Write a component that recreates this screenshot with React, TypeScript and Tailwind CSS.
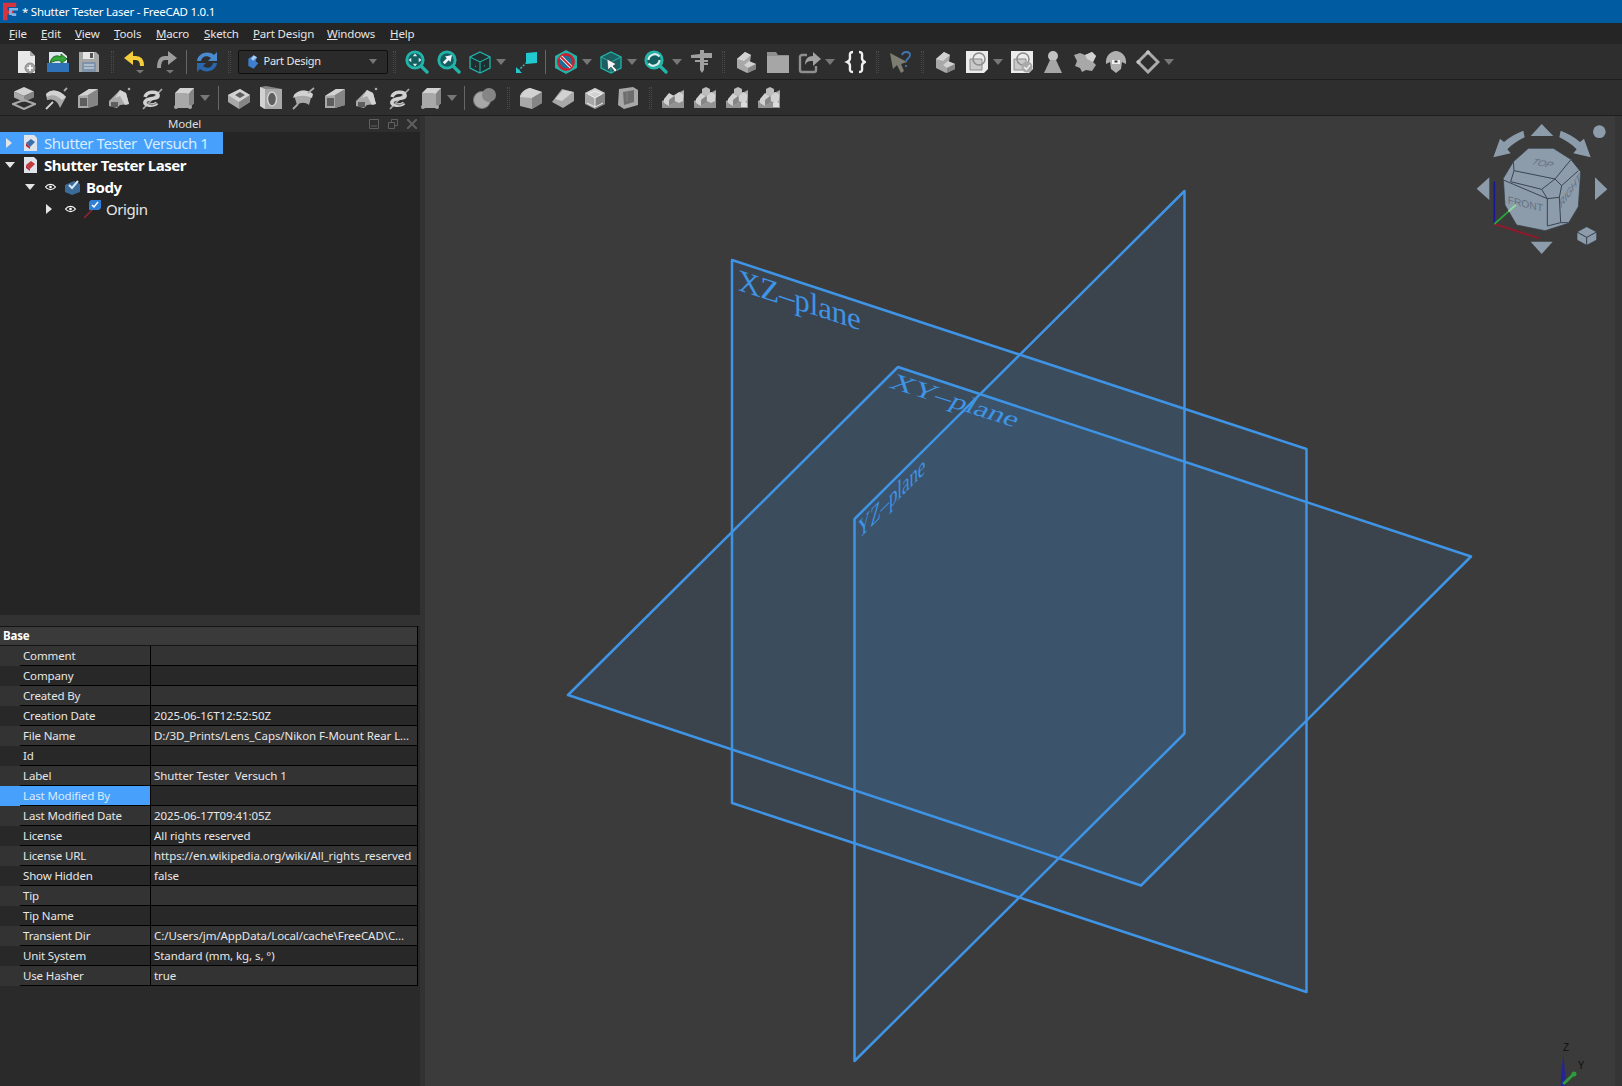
import type { ReactNode } from "react";

const T = "#d2d2d2";
const L = "#a8a8a8";
const R = "#858585";
const D = "#5e5e5e";
const TEAL = "#22b3a9";

const box = (
  <>
    <path d="M12 2 22 7v11l-10 5L2 18V7Z" fill={L} />
    <path d="M12 2 22 7l-10 5L2 7Z" fill={T} />
    <path d="M22 7 12 12v11l10-5Z" fill={R} />
  </>
);
const step = (
  <>
    <path d="M3 9 11 2l6 3-1 7 6 2v5l-9 4-10-5Z" fill={L} />
    <path d="M3 9 11 2l6 3-7 6Z" fill={T} />
    <path d="M15 11l7 3-8 4-4-3Z" fill={T} />
    <path d="M14 23v-5l8-4v5Z" fill={R} />
  </>
);
const loft = (
  <>
    <path d="M2 10 13 3h9v16l-10 3H2Z" fill={L} />
    <path d="M2 10 13 3h9l-10 6Z" fill={T} />
    <path d="M4 12h7v8H4Z" fill={D} />
    <path d="M12 9 22 3v16l-10 3Z" fill={R} />
  </>
);
const pipe = (
  <>
    <path d="M1 15 12 4l6 3 3 11-9 1-3 3-8-2Z" fill={L} />
    <path d="M12 4l6 3 3 11-4 1-5-9-5 2Z" fill={T} />
    <path d="M3 16h7v5H3Z" fill={D} />
    <circle cx="21" cy="3" r="1.300" fill={L} />
  </>
);
const helix = (
  <>
    <path d="M3 23 22 3" stroke={L} strokeWidth="1.800" />
    <path d="M5 11c2-6 12-6 13-2 1 5-12 2-13 7-1 4 9 4 12 1" fill="none" stroke={T} strokeWidth="3.600" />
    <path d="M7 17c3 2 7 2 10 0" fill="none" stroke={R} strokeWidth="1.500" />
  </>
);
const revolve = (
  <>
    <path d="M2 8C8 2 16 4 22 11l-6 11C14 15 9 12 3 14Z" fill={L} />
    <path d="M2 8C8 2 16 4 22 11l-4 3C13 9 8 8 3 11Z" fill={T} />
    <path d="M2 23 9 16" stroke={T} strokeWidth="1.800" />
    <path d="M20 5l3-3" stroke={L} strokeWidth="1.800" />
  </>
);
const prim = (
  <>
    <path d="M3 7 8 2h14v15l-5 5H3Z" fill={T} />
    <path d="M3 7h14v15H3Z" fill={L} />
    <path d="M17 7l5-5v15l-5 5Z" fill={R} />
    <circle cx="16" cy="6" r="1.800" fill={T} />
    <circle cx="4" cy="21" r="2" fill={L} />
    <circle cx="18" cy="21" r="2" fill={L} />
  </>
);
const stack = (n: number) => (
  <>
    <path d="M1 15 9 11l14-7v18H1Z" fill={L} />
    <path d="M1 17 13 11l10 1v10H1Z" fill="#929292" />
    <path d="M3 13l5-6 5 3v7l-5 3-5-3Z" fill={T} />
    <path d="M8 14l5-4v7l-5 3Z" fill={R} />
    {n > 0 && <path d="M14 9l4-3 4 2v7l-4 2-4-2Z" fill={T} />}
    {n > 1 && <path d="M9 3l4-2 4 2v5l-4 2-4-2Z" fill="#bdbdbd" />}
    {n > 2 && <path d="M16 17l3-2 3 2v4h-6Z" fill="#dcdcdc" />}
  </>
);
const mag = (inner: ReactNode) => (
  <>
    <path d="M15.500 15.500 22 22" stroke={TEAL} strokeWidth="3.400" strokeLinecap="round" />
    <circle cx="10" cy="10" r="8.200" fill="#155e60" stroke={TEAL} strokeWidth="2.800" />
    {inner}
  </>
);
const wire = (
  <>
    <path d="M12 2 22 7v11l-10 5L2 18V7Z" fill="#1f2e2f" stroke={TEAL} strokeWidth="1.300" />
    <path d="M2 7 12 12l10-5M12 12v11" fill="none" stroke={TEAL} strokeWidth="1.100" />
    <path d="M7 16l1 .5M16 16l1-.5" stroke={TEAL} />
  </>
);
const doc = (
  <>
    <path d="M4 1h12l5 5v17H4Z" fill="#e8e8e8" />
    <path d="M16 1v5h5Z" fill="#a9a9a9" />
  </>
);

const icons: Record<string, ReactNode> = {
  newDoc: (
    <>
      {doc}
      <circle cx="16" cy="18" r="5" fill="#a3a3a3" stroke="#888" />
      <path d="M16 15v6M13 18h6" stroke="#fff" strokeWidth="1.600" />
    </>
  ),
  open: (
    <>
      <path d="M3 2h13l5 4v10H3Z" fill="#dfe7ee" />
      <path d="M4 13c1-6 6-9 11-6V4l6 5-6 5v-3c-4-1-7 0-11 2Z" fill="#35a63a" stroke="#0d5c10" strokeWidth=".8" />
      <path d="M1 13h22v9H1Z" fill="#2f72b8" />
    </>
  ),
  save: (
    <>
      <path d="M2 2h17l3 3v17H2Z" fill="#a6a6a6" />
      <path d="M6 2h11v7H6Z" fill="#e6e6e6" />
      <path d="M13 3h3v5h-3Z" fill="#555" />
      <path d="M5 12h14v10H5Z" fill="#7f93aa" />
      <path d="M7 15h10M7 18h10" stroke="#dfe6ee" />
    </>
  ),
  undo: (
    <>
      <path d="M9 8h4c4 0 6 3 6 8" fill="none" stroke="#f4cd3a" strokeWidth="4" />
      <path d="M10 1 1 8l9 7Z" fill="#f4cd3a" />
      <path d="M13 20h8l-4 3.500Z" fill="#777" />
    </>
  ),
  redo: (
    <>
      <path d="M15 8h-4c-4 0-6 3-6 10" fill="none" stroke="#9c9c9c" strokeWidth="4" />
      <path d="M14 1l9 7-9 7Z" fill="#9c9c9c" />
      <path d="M12 20h8l-4 3.500Z" fill="#777" />
    </>
  ),
  refresh: (
    <>
      <path d="M2 11C3 3 13 0 19 5l3-3v9h-9l3-3c-4-3-9-2-10 3Z" fill="#4a8ad0" />
      <path d="M22 13c-1 8-11 11-17 6l-3 3v-9h9l-3 3c4 3 9 2 10-3Z" fill="#2a66aa" />
    </>
  ),
  partWb: (
    <>
      <path d="M5 7 13 2l5 3-2 6 4 3-7 8-8-4Z" fill="#3f7fd0" />
      <path d="M13 2l5 3-6 5-3-3Z" fill="#a9cdf5" />
    </>
  ),
  zoomFit: mag(<path d="M10 3.500l2.200 2.800H7.800ZM10 16.500l2.200-2.800H7.800ZM3.500 10l2.800-2.200v4.400ZM16.500 10l-2.800-2.200v4.400Z" fill="#d8eef5" />),
  zoomSel: mag(<path d="M15 5 8 6.500l1.800 1.800-4 4 1.900 1.900 4-4L13.500 12Z" fill="#eef7fb" />),
  cube: wire,
  fit: (
    <>
      <path d="M13 3l11-1v11l-11 1Z" fill="#22c9cf" />
      <path d="M5 21 13 13" stroke="#22c9cf" strokeWidth="1.400" strokeDasharray="2 1.500" />
      <path d="M3 17l6 6H3Z" fill="#22c9cf" />
    </>
  ),
  noEntry: (
    <>
      <path d="M12 0 23 6v12l-11 6L1 18V6Z" fill={TEAL} />
      <circle cx="12" cy="12" r="7.600" fill="#1d6d94" stroke="#c8202f" strokeWidth="2.600" />
      <path d="M6.800 6.800 17.200 17.200" stroke="#efefef" strokeWidth="3.600" />
      <path d="M6.800 6.800 17.200 17.200" stroke="#c8202f" strokeWidth="1.800" />
    </>
  ),
  cubeArrow: (
    <>
      <path d="M12 2 22 7v11l-10 5L2 18V7Z" fill="#1b5f60" stroke={TEAL} strokeWidth="1.300" />
      <path d="M2 7 12 12l10-5M12 12v11" fill="none" stroke={TEAL} strokeWidth="1" />
      <path d="M8 9l1 11 3-3 4 5 2-2-4-4 3-2Z" fill="#f4f4f4" stroke="#222" strokeWidth=".5" />
    </>
  ),
  magRefresh: mag(<path d="M4.500 10c0-5 7-8 11-3.500M15.500 10c0 5-7 8-11 3.500" fill="none" stroke="#d6f0ee" strokeWidth="2.200" />),
  caliper: (
    <path d="M11 0h4v3h8v5h-8v2h4v2h-4v1h4v2h-4v5l-2 3-2-3v-8H6v-2h5V8H2V5l9-1Z" fill="#a0a0a0" />
  ),
  folder: (
    <>
      <path d="M1 2h9l2 3h11v18H1Z" fill="#8f8f8f" />
      <path d="M1 6h22v17H1Z" fill="#a6a6a6" />
    </>
  ),
  share: (
    <>
      <path d="M10 5H5a2 2 0 0 0-2 2v13a2 2 0 0 0 2 2h12a2 2 0 0 0 2-2v-4" fill="none" stroke="#8f8f8f" strokeWidth="2.400" />
      <path d="M24 9 16 2v4c-5 0-8 3-8 9 2-4 4-4 8-4v5Z" fill="#a2a2a2" />
    </>
  ),
  braces: (
    <path d="M11 2C7 2 8 5 8 8s-1 3-3 4c2 1 3 1 3 4s-1 6 3 6M17 2c4 0 3 3 3 6s1 3 3 4c-2 1-3 1-3 4s1 6-3 6" fill="none" stroke="#f0f0f0" strokeWidth="2.400" />
  ),
  help: (
    <>
      <path d="M2 3 19 12l-6 2 3 7-3 2-4-8-4 4Z" fill="#7d7d72" />
      <path d="M14 5c1-4 8-4 8 0 0 4-4 3-4 7M18 15v2" fill="none" stroke="#3f77b5" strokeWidth="1.800" />
    </>
  ),
  step,
  sketch: (
    <>
      <path d="M1 1h22v18l-4 4H1Z" fill="#ececec" />
      <path d="M5 9h12v11H5Z" fill="#c9c9c9" stroke="#8c8c8c" />
      <circle cx="14" cy="9" r="6" fill="none" stroke="#8c8c8c" strokeWidth="1.500" />
    </>
  ),
  sketchOk: (
    <>
      <path d="M1 1h22v18l-4 4H1Z" fill="#ececec" />
      <path d="M4 9h12v11H4Z" fill="#c9c9c9" stroke="#8c8c8c" />
      <circle cx="13" cy="9" r="6" fill="none" stroke="#8c8c8c" strokeWidth="1.500" />
      <circle cx="17" cy="17" r="5.500" fill="#a9a9a9" />
      <path d="M14 17l2.400 2.400L20 15" fill="none" stroke="#eee" strokeWidth="1.500" />
    </>
  ),
  pawn: (
    <>
      <circle cx="12" cy="6" r="5" fill="#c2c2c2" />
      <path d="M9 10h6l6 13H3Z" fill="#a6a6a6" />
    </>
  ),
  shapes: (
    <>
      <path d="M1 5l6-2 5 2 7-3 4 4-3 6 3 3-4 6-6-1-4 2-2-4-5-2 2-5Z" fill="#a8a8a8" />
      <path d="M12 5l7-3 4 4-3 6-6-3Z" fill={T} />
    </>
  ),
  cast: (
    <>
      <path d="M2 14C1 6 7 1 12 1s11 5 10 13l-4-2-1 7-5 4-5-4-1-7Z" fill="#b0b0b0" />
      <path d="M8 10h8v4H8Z" fill="#f2f2f2" />
      <path d="M10.500 10.500h3v2h-3Z" fill="#333" />
    </>
  ),
  diamond: (
    <>
      <path d="M12 2 22 12 12 22 2 12Z" fill="none" stroke="#ababab" strokeWidth="3" />
      <circle cx="12" cy="2.500" r="2" fill="#c4c4c4" />
      <circle cx="2.500" cy="12" r="2" fill="#c4c4c4" />
    </>
  ),
  pad: (
    <>
      <path d="M12 1 22 5.500 12 10 2 5.500Z" fill={T} />
      <path d="M2 5.500 12 10v6L2 11.500Z" fill={L} />
      <path d="M22 5.500 12 10v6l10-4.500Z" fill={R} />
      <path d="M12 14 23 18l-11 5L1 18Z" fill="none" stroke={L} strokeWidth="2" />
    </>
  ),
  revolve,
  loft,
  pipe,
  helix,
  prim,
  pocket: (
    <>
      <path d="M13 3 23 9v7l-11 7L1 16V9Z" fill={L} />
      <path d="M13 3 23 9l-11 7L1 9Z" fill={T} />
      <path d="M8 9l5-3 5 3-5 3Z" fill={D} />
      <path d="M23 9 12 16v7l11-7Z" fill={R} />
    </>
  ),
  hole: (
    <>
      <path d="M1 1 7 0l16 3v20H5l-4-3Z" fill={R} />
      <path d="M6 3h17v20H6Z" fill={L} />
      <path d="M1 1l5 2v20l-5-3Z" fill={T} />
      <ellipse cx="13" cy="13" rx="4.500" ry="7" fill={D} stroke={T} strokeWidth="1.500" />
    </>
  ),
  groove: (
    <>
      <path d="M3 9c5-6 13-6 18-1l-3 11c-4-3-8-3-12 0Z" fill={L} />
      <path d="M2 12c6-3 13-3 19 0l1-4C16 3 8 4 3 9Z" fill={T} />
      <path d="M2 23l5-5M17 7l6-5" stroke={L} strokeWidth="1.800" />
    </>
  ),
  bool: (
    <>
      <circle cx="9" cy="14" r="8.500" fill={L} stroke="#777" />
      <circle cx="16" cy="9" r="7" fill={R} />
    </>
  ),
  fillet: (
    <>
      <path d="M1 20V10C2 6 6 3 11 2l12 4v11l-10 6Z" fill={L} />
      <path d="M1 11C3 6 6 3 11 2l12 4-10 6Z" fill={T} />
      <path d="M23 6 13 12v11l10-6Z" fill={R} />
    </>
  ),
  chamfer: (
    <>
      <path d="M1 16 11 3l12 3v9l-11 7Z" fill={L} />
      <path d="M4 13 12 4l10 2-11 9Z" fill={T} />
    </>
  ),
  draft: (
    <>
      {box}
      <path d="M5 8 12 5l7 3-7 4ZM12 12v9M4 17l8 4 8-4" fill="none" stroke="#eee" strokeWidth="1" />
    </>
  ),
  thick: (
    <>
      <path d="M4 3 18 1l5 3v15l-14 4-6-4Z" fill={L} />
      <path d="M8 6l11-2v12L9 19Z" fill="#6e6e6e" />
      <path d="M12 5v10" stroke={R} />
    </>
  ),
  mirror: stack(1),
  linear: stack(2),
  polar: stack(3),
  multi: stack(3),
};

function Grip() {
  return (
    <div className="w-[14px] h-[22px] flex items-center justify-center">
      <div className="w-[3px] h-full border-x border-dotted border-[#4a4a4a]" />
    </div>
  );
}

function Sep() {
  return (
    <div className="w-[9px] h-[24px] flex items-center justify-center">
      <div className="w-px h-full bg-[#666666]" />
    </div>
  );
}

function Drop() {
  return (
    <div className="w-[13.5px] flex items-center">
      <svg width="10" height="6" viewBox="0 0 10 6">
        <path d="M0 0h10L5 6Z" fill="#777777" />
      </svg>
    </div>
  );
}

function Tool({ name, w }: { name: string; w: string }) {
  return (
    <div className={`${w} h-full flex items-center justify-center`}>
      <svg width="24" height="24" viewBox="0 0 24 24">
        {icons[name]}
      </svg>
    </div>
  );
}

function Items({ items, wide }: { items: string[]; wide?: boolean }) {
  return (
    <>
      {items.map((it, i) => {
        if (it === "|") return <Sep key={i} />;
        if (it === ":") return <Grip key={i} />;
        if (it === "v") return <Drop key={i} />;
        return <Tool key={i} name={it} w={wide ? "w-[32px]" : "w-[31.5px]"} />;
      })}
    </>
  );
}

const menu = [
  ["F", "ile", "w-[32px]"],
  ["E", "dit", "w-[34px]"],
  ["V", "iew", "w-[39px]"],
  ["T", "ools", "w-[42px]"],
  ["M", "acro", "w-[48px]"],
  ["S", "ketch", "w-[49px]"],
  ["P", "art Design", "w-[74px]"],
  ["W", "indows", "w-[63px]"],
  ["H", "elp", "w-[40px]"],
];

const props: [string, string][] = [
  ["Comment", ""],
  ["Company", ""],
  ["Created By", ""],
  ["Creation Date", "2025-06-16T12:52:50Z"],
  ["File Name", "D:/3D_Prints/Lens_Caps/Nikon F-Mount Rear L..."],
  ["Id", ""],
  ["Label", "Shutter Tester  Versuch 1"],
  ["Last Modified By", ""],
  ["Last Modified Date", "2025-06-17T09:41:05Z"],
  ["License", "All rights reserved"],
  ["License URL", "https://en.wikipedia.org/wiki/All_rights_reserved"],
  ["Show Hidden", "false"],
  ["Tip", ""],
  ["Tip Name", ""],
  ["Transient Dir", "C:/Users/jm/AppData/Local/cache\\FreeCAD\\C..."],
  ["Unit System", "Standard (mm, kg, s, °)"],
  ["Use Hasher", "true"],
];

function Eye() {
  return (
    <svg width="11" height="8" viewBox="0 0 11 8" className="shrink-0">
      <path d="M.5 4C3 .5 8 .5 10.500 4 8 7.500 3 7.500.5 4Z" fill="none" stroke="#fff" strokeWidth="1.200" />
      <circle cx="5.500" cy="4" r="1.300" fill="#fff" />
    </svg>
  );
}

function Arrow({ open }: { open?: boolean }) {
  return open ? (
    <svg width="10" height="6" viewBox="0 0 10 6">
      <path d="M0 0h10L5 6Z" fill="#e4e4e4" />
    </svg>
  ) : (
    <svg width="6" height="10" viewBox="0 0 6 10">
      <path d="M0 0v10l6-5Z" fill="#e4e4e4" />
    </svg>
  );
}

function DocIcon({ tint }: { tint: string }) {
  return (
    <svg width="13" height="16" viewBox="0 0 13 16" className="shrink-0">
      <path d="M0 0h10l3 3v13H0Z" fill="#dfe4ea" />
      <path d="M2 8l5-4 4 3-5 5Z" fill={tint} />
      <path d="M2 8l4 4v2L2 11Z" fill="#b3263a" />
    </svg>
  );
}

function CheckBadge() {
  return (
    <svg width="12" height="10" viewBox="0 0 12 10" className="absolute -top-px right-0">
      <path d="M2 0h10v8l-2 2H0V2Z" fill="#2f7fd6" />
      <path d="M3 5l2 2 4-5" fill="none" stroke="#fff" strokeWidth="1.500" />
    </svg>
  );
}

function TreeRow({ className, children }: { className: string; children: ReactNode }) {
  return (
    <div className={`h-[22px] flex items-center whitespace-pre text-[15px] tracking-[-0.45px] ${className}`}>{children}</div>
  );
}

function NavCube() {
  return (
    <svg width="182" height="170" viewBox="0 0 546 510">
      <g fill="#8d9cab">
        <path d="M305 72 272 108H340Z" />
        <path d="M272 425H338L305 462Z" />
        <path d="M148 232 110 266 148 300Z" />
        <path d="M465 232 502 268 465 300Z" />
        <circle cx="478" cy="95" r="19" />
        <path d="M250 92C228 100 210 110 192 126L180 116 160 172 212 160 202 148C218 132 234 122 254 112Z" />
        <path d="M362 92C384 100 402 110 420 126L432 116 452 172 400 160 410 148C394 132 378 122 358 112Z" />
      </g>
      <path
        d="M265 145 340 145 392 178 422 215 415 320 385 370 315 392 230 375 195 315 190 235 220 185Z"
        fill="#8d9cab"
        stroke="#333c45"
        strokeWidth="2"
      />
      <g fill="none" stroke="#3a4550" strokeWidth="3">
        <path d="M220 185 222 212 345 237 392 180" />
        <path d="M222 212 212 245 305 268 345 237 365 257 415 212" />
        <path d="M190 240 322 296 358 292 365 257" />
        <path d="M305 268 322 296V378M358 292 362 368M322 378 362 368 385 368" />
      </g>
      <g fill="#64707e" fontFamily="'Liberation Sans', sans-serif">
        <text transform="matrix(1 .2 -.5 .8 272 192)" fontSize="30" fontStyle="italic">
          TOP
        </text>
        <text transform="matrix(1 .24 0 1 203 310)" fontSize="31">
          FRONT
        </text>
        <text transform="matrix(.62 -.88 .2 1 362 326)" fontSize="32">
          RIGHT
        </text>
      </g>
      <path d="M163 245V372" stroke="#17179a" strokeWidth="5" />
      <path d="M163 372 298 415" stroke="#8e1a2c" strokeWidth="6" />
      <path d="M163 372 205 335" stroke="#27a83c" strokeWidth="5" />
      <path d="M205 335 228 314" stroke="#8fe09c" strokeWidth="5" />
      <path d="M440 380 470 396V420L440 436 411 420V396Z" fill="#8d9cab" stroke="#333c45" strokeWidth="2" />
      <path d="M411 396 440 412 470 396M440 412V436" fill="none" stroke="#333c45" strokeWidth="3" />
    </svg>
  );
}

function Planes() {
  // drawn in page coordinates, the svg sits at the origin of the view
  return (
    <svg width="1197" height="970" viewBox="425 116 1197 970" className="absolute inset-0">
      <g fill="#3f94e5" fillOpacity=".11" stroke="#3f94e5" strokeWidth="2.500" strokeLinejoin="round">
        <path d="M732 260 1306.500 449V992L732 803Z" />
        <path d="M898 367 1471 556.500 1141 885.500 568 695Z" />
        <path d="M1184.500 191V733.500L854.500 1061V519Z" />
      </g>
      <g fill="#3f94e5" fontFamily="'Liberation Serif', serif" fontSize="31">
        <text transform="matrix(1 .329 0 1 738 290)">XZ–plane</text>
        <text transform="matrix(1 .32 -.4 .65 888 387)">XY–plane</text>
        <text transform="matrix(.567 -.567 0 .9 858 540)" fontSize="30">
          YZ–plane
        </text>
      </g>
    </svg>
  );
}

export default function App() {
  return (
    <div
      className="w-[1622px] h-[1086px] overflow-hidden flex flex-col bg-[#2e2e2e] text-[11.5px] tracking-[-0.15px] text-[#e6e6e6]"
      style={{ fontFamily: "'Noto Sans', sans-serif" }}
    >
      <div className="h-[23px] shrink-0 bg-[#005ba1] flex items-center text-white tracking-[-0.25px]">
        <svg width="15" height="19" viewBox="0 0 17 20" className="ml-[3px] mr-[4px]">
          <path d="M0 0h15v5H5v4h7v4H5v7H0Z" fill="#d8343f" />
          <path d="M7 6h10v3H10v3h5v3h-5v-1H7Z" fill="#7fb4e8" />
        </svg>
        <span>* Shutter Tester Laser - FreeCAD 1.0.1</span>
      </div>

      <div className="h-[21px] shrink-0 bg-[#252525] flex items-center pl-[9px]">
        {menu.map(([first, rest, w]) => (
          <span key={first} className={`${w} whitespace-nowrap`}>
            <span className="underline">{first}</span>
            {rest}
          </span>
        ))}
      </div>

      <div className="h-[36px] shrink-0 flex items-center pl-[10.5px] border-b border-[#1d1d1d]">
        <Items items={["newDoc", "open", "save", ":", "undo", "redo", "|", "refresh", ":"]} />
        <div className="w-[150px] h-[24px] ml-[1px] bg-[#2a2a2a] border border-[#0f0f0f] rounded-[2px] flex items-center pl-[6px]">
          <svg width="16" height="16" viewBox="0 0 24 24">
            {icons.partWb}
          </svg>
          <span className="ml-[3px] flex-1 text-[11px] tracking-[-0.25px]">Part Design</span>
          <svg width="8" height="5" viewBox="0 0 10 6" className="mr-[10px]">
            <path d="M0 0h10L5 6Z" fill="#777777" />
          </svg>
        </div>
        <Items
          items={[":", "zoomFit", "zoomSel", "cube", "v", "fit", "|", "noEntry", "v", "cubeArrow", "v", "magRefresh", "v", "caliper", ":", "step", "folder", "share", "v", "braces", ":", "help", ":", "step", "sketch", "v", "sketchOk", "pawn", "shapes", "cast", "diamond", "v"]}
        />
      </div>

      <div className="h-[36px] shrink-0 flex items-center pl-[8px] border-b border-[#1d1d1d]">
        <Items
          wide
          items={["pad", "revolve", "loft", "pipe", "helix", "prim", "v", "|", "pocket", "hole", "groove", "loft", "pipe", "helix", "prim", "v", "|", "bool", ":", "fillet", "chamfer", "draft", "thick", ":", "mirror", "linear", "polar", "multi"]}
        />
      </div>

      <div className="flex-1 flex min-h-0">
        <div className="w-[425px] shrink-0 flex flex-col bg-[#323232]">
          <div className="w-[420px] h-[499px] shrink-0 flex flex-col">
            <div className="h-[16px] shrink-0 bg-[#2e2e2e] flex items-center">
              <span className="w-[369px] text-center text-[#dddddd]">Model</span>
              <div className="flex gap-[9px]">
                <svg width="10" height="10" viewBox="0 0 10 10">
                  <path d="M.5.5h9v9h-9ZM2 7h6" fill="none" stroke="#5f5f5f" />
                </svg>
                <svg width="10" height="10" viewBox="0 0 10 10">
                  <path d="M.5 3.500h6v6h-6ZM3.500 3.500v-3h6v6h-3" fill="none" stroke="#5f5f5f" />
                </svg>
                <svg width="10" height="10" viewBox="0 0 10 10">
                  <path d="M0 0 10 10M10 0 0 10" stroke="#5f5f5f" strokeWidth="2" />
                </svg>
              </div>
            </div>
            <div className="flex-1 bg-[#252525]">
              <TreeRow className="w-[223px] bg-[#46a0fc] text-[#d8ecff]">
                <span className="w-[24px] shrink-0 pl-[6px]">
                  <Arrow />
                </span>
                <DocIcon tint="#3a6fb0" />
                <span className="ml-[7px]">Shutter Tester  Versuch 1</span>
              </TreeRow>
              <TreeRow className="font-bold text-white">
                <span className="w-[24px] shrink-0 pl-[5px]">
                  <Arrow open />
                </span>
                <DocIcon tint="#c23a3a" />
                <span className="ml-[7px]">Shutter Tester Laser</span>
              </TreeRow>
              <TreeRow className="font-bold text-white">
                <span className="w-[45px] shrink-0 pl-[25px]">
                  <Arrow open />
                </span>
                <Eye />
                <svg width="17" height="17" viewBox="0 0 17 17" className="ml-[8px] mr-[5px]">
                  <path d="M1 6l9-4 6 3v8l-8 3-7-3Z" fill="#3b6c99" />
                  <path d="M5 6l3 3 6-7" fill="none" stroke="#d7e9fb" strokeWidth="2" />
                </svg>
                <span>Body</span>
              </TreeRow>
              <TreeRow className="text-[#e6e6e6]">
                <span className="w-[65px] shrink-0 pl-[46px]">
                  <Arrow />
                </span>
                <Eye />
                <span className="relative w-[17px] h-[17px] ml-[8px] mr-[5px]">
                  <svg width="12" height="12" viewBox="0 0 12 12" className="absolute left-0 bottom-0">
                    <path d="M0 12 8 4" stroke="#9b2230" strokeWidth="1.500" />
                  </svg>
                  <CheckBadge />
                </span>
                <span>Origin</span>
              </TreeRow>
            </div>
          </div>
          <div className="h-[11px] shrink-0" />
          <div className="w-[420px] flex-1 bg-[#2a2a2a]">
            <div className="w-[418px] border-r border-black">
              <div className="h-[20px] bg-[#3a3a3a] border-y border-[#141414] flex items-center pl-[3px] font-bold text-white">
                Base
              </div>
              {props.map(([k, v], i) => {
                const selected = k === "Last Modified By";
                const bg = i % 2 === 0 ? "bg-[#333333]" : "bg-[#282828]";
                return (
                  <div key={k} className={`h-[20px] flex ${bg}`}>
                    <div className={`w-[20px] shrink-0 ${selected ? "bg-[#46a0fc]" : ""}`} />
                    <div className={`w-[131px] shrink-0 flex items-center pl-[3px] border-b border-r border-black whitespace-nowrap ${selected ? "bg-[#46a0fc] text-[#d8ecff]" : ""}`}>
                      {k}
                    </div>
                    <div className="flex-1 flex items-center pl-[3px] border-b border-black whitespace-pre tracking-[-0.08px]">{v}</div>
                  </div>
                );
              })}
            </div>
          </div>
        </div>

        <div className="relative flex-1 bg-[#3b3b3b]">
          <Planes />
          <div className="absolute top-[-16px] right-0 w-[182px] h-[170px]">
            <NavCube />
          </div>
          <div className="absolute top-0 bottom-0 right-0 w-[7px] bg-[#353535]" />
          <svg width="40" height="46" viewBox="0 0 40 46" className="absolute right-[36px] bottom-0">
            <path d="M14.500 46 17.300 13 20 46Z" fill="#23239a" />
            <path d="M17.300 44 29 33" stroke="#2f9a3c" strokeWidth="3" />
            <circle cx="28" cy="34" r="2.500" fill="#2f9a3c" />
            <text x="20" y="11" fontSize="10" fill="#111" fontFamily="'Liberation Sans', sans-serif" textAnchor="middle">
              Z
            </text>
            <text x="35" y="29" fontSize="10" fill="#111" fontFamily="'Liberation Sans', sans-serif" textAnchor="middle">
              Y
            </text>
          </svg>
        </div>
      </div>
    </div>
  );
}
